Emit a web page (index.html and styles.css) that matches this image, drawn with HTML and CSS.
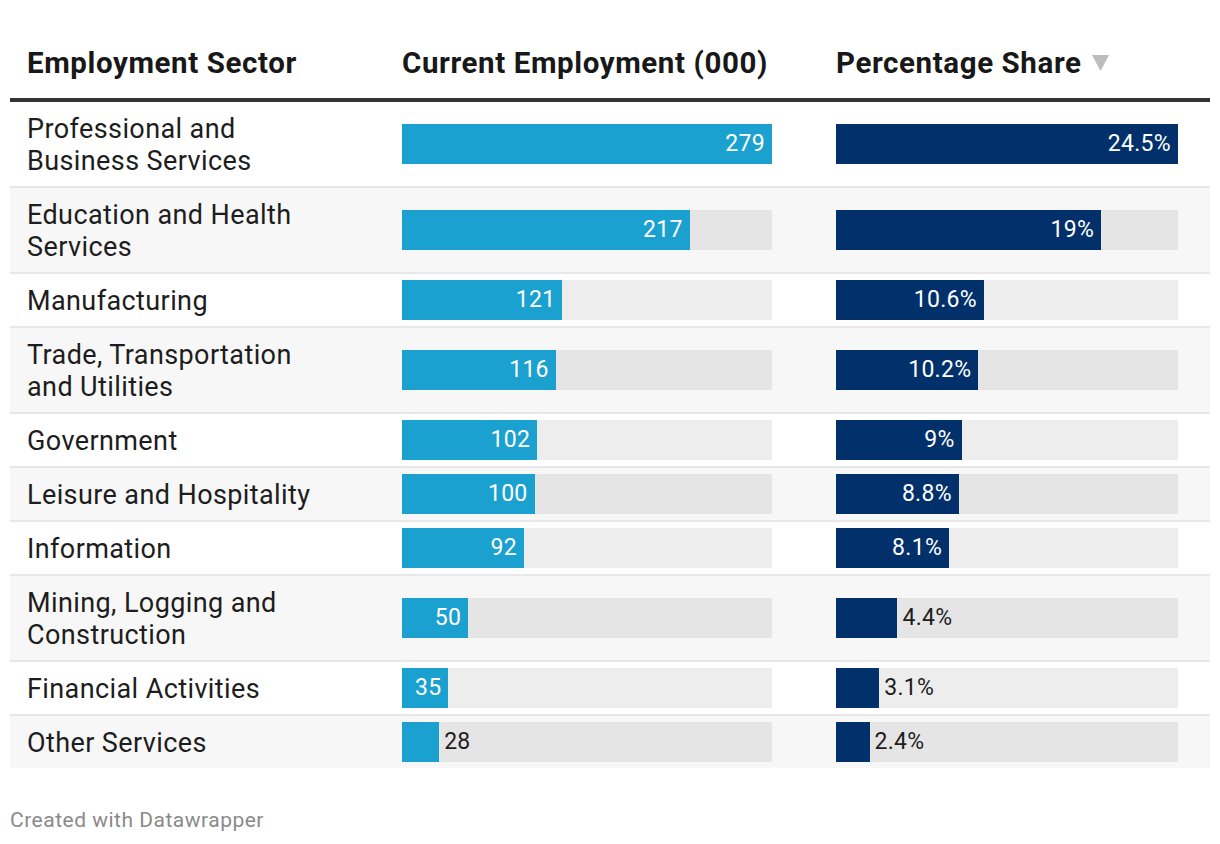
FILE: index.html
```html
<!DOCTYPE html>
<html lang="en">
<head>
<meta charset="utf-8">
<title>Employment by Sector</title>
<link rel="stylesheet" href="styles.css">
</head>
<body>
<div class="chart">
  <div class="table">
    <div class="row head">
      <div class="cell name">Employment Sector</div>
      <div class="cell">Current Employment (000)</div>
      <div class="cell">Percentage Share <svg class="sort" width="17" height="16" viewBox="0 0 17 16"><polygon points="0,0 17,0 8.5,16" fill="#bdbdbd"/></svg></div>
    </div>

    <div class="row">
      <div class="cell name">Professional and<br>Business Services</div>
      <div class="cell"><div class="track emp"><div class="bar blue in" style="width:100%"><span>279</span></div></div></div>
      <div class="cell"><div class="track pct"><div class="bar navy in" style="width:100%"><span>24.5%</span></div></div></div>
    </div>
    <div class="row alt">
      <div class="cell name">Education and Health<br>Services</div>
      <div class="cell"><div class="track emp"><div class="bar blue in" style="width:77.78%"><span>217</span></div></div></div>
      <div class="cell"><div class="track pct"><div class="bar navy in" style="width:77.55%"><span>19%</span></div></div></div>
    </div>
    <div class="row">
      <div class="cell name">Manufacturing</div>
      <div class="cell"><div class="track emp"><div class="bar blue in" style="width:43.37%"><span>121</span></div></div></div>
      <div class="cell"><div class="track pct"><div class="bar navy in" style="width:43.27%"><span>10.6%</span></div></div></div>
    </div>
    <div class="row alt">
      <div class="cell name">Trade, Transportation<br>and Utilities</div>
      <div class="cell"><div class="track emp"><div class="bar blue in" style="width:41.58%"><span>116</span></div></div></div>
      <div class="cell"><div class="track pct"><div class="bar navy in" style="width:41.63%"><span>10.2%</span></div></div></div>
    </div>
    <div class="row">
      <div class="cell name">Government</div>
      <div class="cell"><div class="track emp"><div class="bar blue in" style="width:36.56%"><span>102</span></div></div></div>
      <div class="cell"><div class="track pct"><div class="bar navy in" style="width:36.73%"><span>9%</span></div></div></div>
    </div>
    <div class="row alt">
      <div class="cell name">Leisure and Hospitality</div>
      <div class="cell"><div class="track emp"><div class="bar blue in" style="width:35.84%"><span>100</span></div></div></div>
      <div class="cell"><div class="track pct"><div class="bar navy in" style="width:35.92%"><span>8.8%</span></div></div></div>
    </div>
    <div class="row">
      <div class="cell name">Information</div>
      <div class="cell"><div class="track emp"><div class="bar blue in" style="width:32.97%"><span>92</span></div></div></div>
      <div class="cell"><div class="track pct"><div class="bar navy in" style="width:33.06%"><span>8.1%</span></div></div></div>
    </div>
    <div class="row alt">
      <div class="cell name">Mining, Logging and<br>Construction</div>
      <div class="cell"><div class="track emp"><div class="bar blue in" style="width:17.92%"><span>50</span></div></div></div>
      <div class="cell"><div class="track pct"><div class="bar navy out" style="width:17.96%"><span>4.4%</span></div></div></div>
    </div>
    <div class="row">
      <div class="cell name">Financial Activities</div>
      <div class="cell"><div class="track emp"><div class="bar blue in" style="width:12.54%"><span>35</span></div></div></div>
      <div class="cell"><div class="track pct"><div class="bar navy out" style="width:12.65%"><span>3.1%</span></div></div></div>
    </div>
    <div class="row alt last">
      <div class="cell name">Other Services</div>
      <div class="cell"><div class="track emp"><div class="bar blue out" style="width:10.04%"><span>28</span></div></div></div>
      <div class="cell"><div class="track pct"><div class="bar navy out" style="width:9.8%"><span>2.4%</span></div></div></div>
    </div>
  </div>
  <div class="footer">Created with Datawrapper</div>
</div>
</body>
</html>
```

FILE: styles.css
```css
* { box-sizing: border-box; }

html, body {
  margin: 0;
  padding: 0;
  background: #ffffff;
}

body {
  font-family: Roboto, "Liberation Sans", sans-serif;
  color: #1d1d1d;
}

.chart {
  padding: 0 10px;
}

.table {
  display: flex;
  flex-direction: column;
}

.row {
  display: grid;
  grid-template-columns: 392px 434px 1fr;
  align-items: center;
  border-bottom: 2px solid #e8e8e8;
  background: #ffffff;
}

.row.alt {
  background: #f7f7f7;
}

.row.last {
  border-bottom: none;
}

.cell {
  font-size: 27px;
  line-height: 32px;
  letter-spacing: 0.4px;
  display: flex;
  align-items: center;
}

.row.head {
  border-bottom: 4px solid #333333;
  color: #181818;
  height: 102px;
  align-items: start;
  padding-top: 47px;
}

.row.head .cell {
  font-size: 29.5px;
  font-weight: 700;
  letter-spacing: 0.6px;
}

.cell.name {
  padding: 11px 0 9px 17px;
  display: block;
}

.head .cell.name {
  padding: 0 0 0 17px;
}

.sort {
  margin-left: 10px;
}

.track {
  height: 40px;
  background: rgba(0, 0, 0, 0.07);
  display: flex;
  letter-spacing: 0;
}

.track.emp { width: 370px; }
.track.pct { width: 342px; }

.bar {
  height: 40px;
  position: relative;
  font-size: 23px;
  line-height: 40px;
  letter-spacing: 0.3px;
}

.bar.blue { background: #1ba1cf; }
.bar.navy { background: #01306b; }

.bar.in span {
  position: absolute;
  right: 7px;
  top: 0;
  color: #ffffff;
  white-space: nowrap;
}

.bar.out span {
  position: absolute;
  left: 100%;
  margin-left: 5px;
  top: 0;
  color: #1d1d1d;
  white-space: nowrap;
}

.footer {
  margin-top: 40px;
  font-size: 21px;
  line-height: 24px;
  letter-spacing: 0.5px;
  color: #8a8a8a;
}
```
